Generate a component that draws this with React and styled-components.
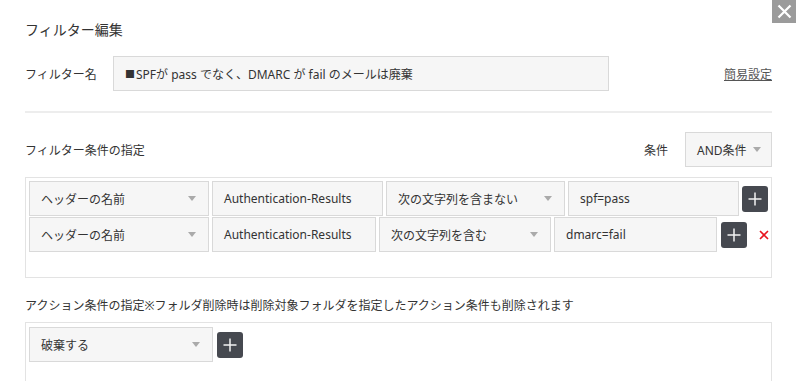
import React from 'react'
import styled, { createGlobalStyle } from 'styled-components'

const Global = createGlobalStyle`
  html, body {
    margin: 0;
    padding: 0;
    background: #fff;
  }
  body {
    font-family: "Noto Sans", "Noto Sans CJK JP", sans-serif;
    color: #333;
    font-size: 12px;
  }
`

const Dialog = styled.div`
  position: relative;
  width: 796px;
  height: 381px;
  overflow: hidden;
  box-sizing: border-box;
  padding: 19px 24px 0 25px;
`

const CloseButton = styled.button`
  position: absolute;
  top: 0;
  right: 0;
  width: 24px;
  height: 23px;
  border: none;
  padding: 0;
  background: #9b9b9b;
  display: flex;
  align-items: center;
  justify-content: center;
`

const Title = styled.div`
  font-size: 14px;
  line-height: 22px;
`

const NameRow = styled.div`
  display: flex;
  align-items: center;
  margin-top: 15px;
`

const Label = styled.div`
  width: ${p => p.$width || 'auto'};
  flex-shrink: 0;
  font-size: 12px;
`

const Field = styled.div`
  box-sizing: border-box;
  width: ${p => p.$width}px;
  height: ${p => p.$height || 35}px;
  flex-shrink: 0;
  border: 1px solid #d9d9d9;
  background: #f6f6f6;
  display: flex;
  align-items: center;
  padding: 0 12px 0 ${p => p.$pad || 11}px;
  font-size: 12px;
  white-space: nowrap;
  overflow: hidden;
`

const Square = styled.span`
  font-size: 10px;
  margin-right: 1px;
`

const SelectText = styled.span`
  flex: 1;
`

const Arrow = styled.span`
  width: 0;
  height: 0;
  border-left: 4px solid transparent;
  border-right: 4px solid transparent;
  border-top: 5px solid #aaa;
  margin-left: 6px;
`

const Link = styled.a`
  margin-left: auto;
  color: #555;
  text-decoration: underline;
  font-size: 12px;
`

const Divider = styled.div`
  height: 2px;
  background: #ededed;
  margin-top: 20px;
`

const SectionHeader = styled.div`
  display: flex;
  align-items: center;
  margin-top: 19px;
  height: 35px;
`

const Spacer = styled.div`
  flex: 1;
`

const CondLabel = styled.span`
  margin-right: 17px;
`

const Panel = styled.div`
  box-sizing: border-box;
  margin-top: ${p => p.$top}px;
  height: ${p => p.$height}px;
  border: 1px solid #e3e3e3;
  padding: ${p => p.$padTop}px 3px 0 3px;
  display: flex;
  flex-direction: column;
  gap: 1px;
`

const Row = styled.div`
  display: flex;
  align-items: center;
  gap: 3px;
`

const PlusButton = styled.button`
  width: 26px;
  height: 26px;
  border: none;
  border-radius: 3px;
  background: #464950;
  padding: 0;
  margin-left: ${p => p.$gap || 0}px;
  display: flex;
  align-items: center;
  justify-content: center;
  flex-shrink: 0;
`

const DeleteMark = styled.span`
  margin-left: 9px;
  display: flex;
  align-items: center;
`

const ActionLabel = styled.div`
  margin-top: 18px;
  line-height: 20px;
  font-size: 12px;
`

const Plus = () => (
  <svg width="16" height="16" viewBox="0 0 16 16">
    <path d="M8 1.5v13M1.5 8h13" stroke="#f2f2f2" strokeWidth="1.5" />
  </svg>
)

const Cross = ({ color, size, width }) => (
  <svg width={size} height={size} viewBox="0 0 10 10">
    <path d="M1 1l8 8M9 1l-8 8" stroke={color} strokeWidth={width} />
  </svg>
)

const Select = ({ width, children, height }) => (
  <Field $width={width} $height={height}>
    <SelectText>{children}</SelectText>
    <Arrow />
  </Field>
)

const conditions = [
  { w: [180, 171, 179, 171], op: '次の文字列を含まない', value: 'spf=pass', del: false },
  { w: [180, 164, 172, 163], op: '次の文字列を含む', value: 'dmarc=fail', del: true },
]

export default function App() {
  return (
    <>
      <Global />
      <Dialog>
        <CloseButton>
          <Cross color="#fff" size={15} width={1.5} />
        </CloseButton>
        <Title>フィルター編集</Title>

        <NameRow>
          <Label $width="88px">フィルター名</Label>
          <Field $width={496}>
            <Square>■</Square>SPFが pass でなく、DMARC が fail のメールは廃棄
          </Field>
          <Link>簡易設定</Link>
        </NameRow>

        <Divider />

        <SectionHeader>
          <Label>フィルター条件の指定</Label>
          <Spacer />
          <CondLabel>条件</CondLabel>
          <Select width={87}>AND条件</Select>
        </SectionHeader>

        <Panel $top={10} $height={101} $padTop={3}>
          {conditions.map((c, i) => (
            <Row key={i}>
              <Select width={c.w[0]}>ヘッダーの名前</Select>
              <Field $width={c.w[1]}>Authentication-Results</Field>
              <Select width={c.w[2]}>{c.op}</Select>
              <Field $width={c.w[3]}>{c.value}</Field>
              <PlusButton $gap={c.del ? 1 : 0}>
                <Plus />
              </PlusButton>
              {c.del && (
                <DeleteMark>
                  <Cross color="#e8141e" size={10} width={1.6} />
                </DeleteMark>
              )}
            </Row>
          ))}
        </Panel>

        <ActionLabel>アクション条件の指定※フォルダ削除時は削除対象フォルダを指定したアクション条件も削除されます</ActionLabel>

        <Panel $top={6} $height={80} $padTop={4}>
          <Row>
            <Select width={184}>破棄する</Select>
            <PlusButton $gap={1}>
              <Plus />
            </PlusButton>
          </Row>
        </Panel>
      </Dialog>
    </>
  )
}
